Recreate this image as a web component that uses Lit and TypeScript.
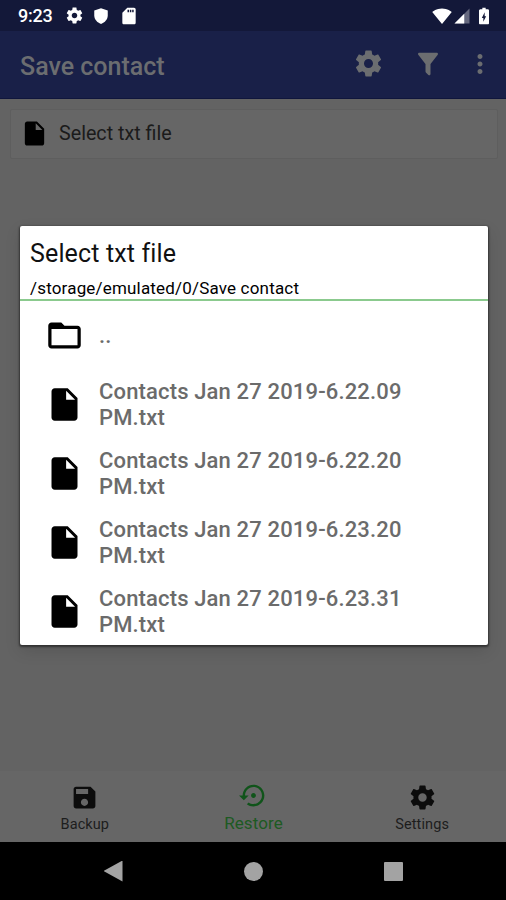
import { LitElement, html, css, svg } from "lit";
import { customElement, property } from "lit/decorators.js";

const ICONS: Record<string, string> = {
  settings:
    "M19.43 12.98c.04-.32.07-.64.07-.98s-.03-.66-.07-.98l2.11-1.65c.19-.15.24-.42.12-.64l-2-3.46c-.12-.22-.39-.3-.61-.22l-2.49 1c-.52-.4-1.08-.73-1.69-.98l-.38-2.65C14.46 2.18 14.25 2 14 2h-4c-.25 0-.46.18-.49.42l-.38 2.65c-.61.25-1.17.59-1.69.98l-2.49-1c-.23-.09-.49 0-.61.22l-2 3.46c-.13.22-.07.49.12.64l2.11 1.65c-.04.32-.07.65-.07.98s.03.66.07.98l-2.11 1.65c-.19.15-.24.42-.12.64l2 3.46c.12.22.39.3.61.22l2.49-1c.52.4 1.08.73 1.69.98l.38 2.65c.03.24.24.42.49.42h4c.25 0 .46-.18.49-.42l.38-2.65c.61-.25 1.17-.59 1.69-.98l2.49 1c.23.09.49 0 .61-.22l2-3.46c.12-.22.07-.49-.12-.64l-2.11-1.65zM12 15.5c-1.93 0-3.5-1.57-3.5-3.5s1.57-3.5 3.5-3.5 3.5 1.57 3.5 3.5-1.57 3.5-3.5 3.5z",
  shield: "M12 1.500L3 4.700v6.400c0 5.400 3.800 9.900 9 11.400 5.200-1.500 9-6 9-11.400V4.700L12 1.500z",
  sdcard:
    "M18 2h-8L4 8v12c0 1.100.9 2 2 2h12c1.100 0 2-.9 2-2V4c0-1.100-.9-2-2-2zm-6 5.500h-1.800V4.500H12v3zm2.800 0H13V4.500h1.800v3zm2.800 0h-1.800V4.500h1.800v3z",
  filter:
    "M14 12v7.880c.04.3-.06.62-.29.83-.39.39-1.020.39-1.410 0L10.290 18.700c-.23-.23-.33-.54-.29-.83V12h-.03L4.210 4.620c-.34-.43-.26-1.060.17-1.400.19-.14.4-.22.62-.22h14c.22 0 .43.08.62.22.43.34.51.97.17 1.400L14.030 12H14z",
  more: "M12 8c1.100 0 2-.9 2-2s-.9-2-2-2-2 .9-2 2 .9 2 2 2zm0 2c-1.100 0-2 .9-2 2s.9 2 2 2 2-.9 2-2-.9-2-2-2zm0 6c-1.100 0-2 .9-2 2s.9 2 2 2 2-.9 2-2-.9-2-2-2z",
  file: "M6 2c-1.100 0-1.990.9-1.990 2L4 20c0 1.100.89 2 1.990 2H18c1.100 0 2-.9 2-2V8l-6-6H6zm7 7V3.500L18.500 9H13z",
  folder:
    "M20 6h-8l-2-2H4c-1.100 0-1.990.9-1.990 2L2 18c0 1.100.9 2 2 2h16c1.100 0 2-.9 2-2V8c0-1.100-.9-2-2-2zm0 12H4V8h16v10z",
  save: "M17 3H5c-1.110 0-2 .9-2 2v14c0 1.100.89 2 2 2h14c1.100 0 2-.9 2-2V7l-4-4zm-5 16c-1.660 0-3-1.340-3-3s1.340-3 3-3 3 1.340 3 3-1.340 3-3 3zm3-10H5V5h10v4z",
  restore:
    "M14 12c0-1.100-.9-2-2-2s-2 .9-2 2 .9 2 2 2 2-.9 2-2zm-2-9c-4.970 0-9 4.030-9 9H0l4 4 4-4H5c0-3.870 3.130-7 7-7s7 3.130 7 7-3.130 7-7 7c-1.510 0-2.910-.49-4.060-1.300l-1.420 1.440C8.040 20.300 9.940 21 12 21c4.970 0 9-4.030 9-9s-4.030-9-9-9z",
  wifi: "M12 21.500L.3 7.200C1 6.700 5.300 3 12 3s11 3.700 11.700 4.200L12 21.500z",
  battery:
    "M15.670 4H14V2h-4v2H8.330C7.600 4 6 4.600 6 5.330v15.330C6 21.400 6.600 22 7.330 22h9.330c.74 0 1.340-.6 1.340-1.330V5.330C18 4.600 17.400 4 15.670 4zM11.200 19v-4.700H9.400L12.800 7.500v4.900h1.800L11.200 19z",
};

@customElement("md-icon")
export class MdIcon extends LitElement {
  @property() name = "";
  static styles = css`
    :host { display: block; flex: none; width: 24px; height: 24px; }
    svg { display: block; width: 100%; height: 100%; fill: currentColor; }
    .dim { opacity: 0.35; }
  `;
  render() {
    return html`<svg viewBox="0 0 24 24">
      ${this.name === "signal"
        ? svg`<path class="dim" d="M2 22h20V2z"/><path d="M2 22h13V9z"/>`
        : svg`<path fill-rule="evenodd" d=${ICONS[this.name] ?? ""}/>`}
    </svg>`;
  }
}

const FILES = ["6.22.09", "6.22.20", "6.23.20", "6.23.31"];

@customElement("app-root")
export class AppRoot extends LitElement {
  static styles = css`
    :host {
      display: flex;
      flex-direction: column;
      position: relative;
      width: 506px;
      height: 900px;
      overflow: hidden;
      background: #636363;
      font-family: Roboto, "Liberation Sans", sans-serif;
      color: #000;
      white-space: nowrap;
    }
    .status {
      height: 31px;
      flex: none;
      box-sizing: border-box;
      background: #131839;
      color: #fff;
      display: flex;
      align-items: center;
      padding: 0 12px 0 18px;
    }
    .clock { font-size: 18px; font-weight: 500; line-height: 33px; width: 46px; letter-spacing: -0.2px; }
    .s-gear { width: 19px; height: 19px; margin-left: 1px; }
    .s-shield { width: 18px; height: 18px; margin-left: 8px; }
    .s-sd { width: 20px; height: 20px; margin-left: 9px; }
    .s-wifi { width: 20px; height: 20px; margin-left: auto; }
    .s-signal { width: 18px; height: 18px; margin-left: 1px; }
    .s-battery { width: 20px; height: 20px; margin-left: 3px; }
    .appbar {
      height: 68px;
      flex: none;
      box-sizing: border-box;
      background: #192048;
      border-bottom: 1px solid #10163c;
      color: #6b6d70;
      display: flex;
      align-items: center;
      padding: 0 11px 2px 20px;
    }
    .title { font-size: 25px; font-weight: 500; flex: 1; padding-top: 5px; }
    .a-gear { width: 31px; height: 31px; }
    .a-filter { width: 30px; height: 30px; margin-left: 29px; }
    .a-more { width: 30px; height: 30px; margin-left: 22px; }
    .content { flex: 1; padding: 10px 8px 0 10px; }
    .card {
      height: 50px;
      box-sizing: border-box;
      background: #666;
      border: 1px solid #5e5e5e;
      border-radius: 2px;
      display: flex;
      align-items: center;
      padding: 0 0 2px 9px;
      font-size: 19.700px;
      color: #1b1b1b;
    }
    .card md-icon { width: 29px; height: 29px; color: #000; margin-right: 10px; }
    .nav {
      height: 71px;
      flex: none;
      background: #666;
      display: grid;
      grid-template-columns: repeat(3, 1fr);
      font-size: 14.500px;
      letter-spacing: 0.1px;
      color: #1d1d1d;
    }
    .tab { display: flex; flex-direction: column; align-items: center; padding: 12px 0 0 1px; box-sizing: border-box; }
    .tab md-icon { width: 29px; height: 29px; color: #0c0c0c; }
    .tab span { line-height: 20px; margin-top: 3px; }
    .active { color: #1d5a22; font-size: 17px; padding-top: 10px; }
    .active md-icon { color: #10541a; }
    .sys {
      height: 58px;
      flex: none;
      background: #000;
      display: flex;
      justify-content: center;
      align-items: center;
      gap: 121px;
    }
    .back, .home, .recent { display: block; background: #a3a3a3; }
    .back { width: 19px; height: 21px; clip-path: polygon(0 50%, 100% 0, 100% 100%); }
    .home { width: 19px; height: 19px; border-radius: 50%; }
    .recent { width: 19px; height: 19px; border-radius: 1px; }
    .dialog {
      position: absolute;
      left: 20px;
      top: 225.500px;
      width: 467.500px;
      height: 419.500px;
      background: #fff;
      border-radius: 2px;
      box-shadow: 0 1px 2px 1px rgba(0, 0, 0, 0.45), 0 6px 16px rgba(0, 0, 0, 0.12);
      overflow: hidden;
    }
    .head {
      height: 75px;
      box-sizing: border-box;
      border-bottom: 2px solid #8bca8e;
      padding: 12.500px 10px 0;
    }
    .heading { font-size: 25px; line-height: 32px; color: #111; letter-spacing: 0.14px; }
    .path { font-size: 17px; line-height: 20px; margin-top: 8px; color: #000; letter-spacing: 0.18px; }
    .row {
      height: 69px;
      display: flex;
      align-items: center;
      padding-left: 25px;
      font-size: 22px;
      line-height: 26px;
      font-weight: 500;
      letter-spacing: 0.15px;
      color: #6b6b6b;
    }
    .row md-icon { width: 39px; height: 39px; color: #000; margin-right: 15px; }
    .label { width: 330px; white-space: normal; padding-top: 1px; }
  `;

  render() {
    return html`
      <div class="status">
        <span class="clock">9:23</span>
        <md-icon class="s-gear" name="settings"></md-icon>
        <md-icon class="s-shield" name="shield"></md-icon>
        <md-icon class="s-sd" name="sdcard"></md-icon>
        <md-icon class="s-wifi" name="wifi"></md-icon>
        <md-icon class="s-signal" name="signal"></md-icon>
        <md-icon class="s-battery" name="battery"></md-icon>
      </div>
      <div class="appbar">
        <span class="title">Save contact</span>
        <md-icon class="a-gear" name="settings"></md-icon>
        <md-icon class="a-filter" name="filter"></md-icon>
        <md-icon class="a-more" name="more"></md-icon>
      </div>
      <div class="content">
        <div class="card"><md-icon name="file"></md-icon><span>Select txt file</span></div>
      </div>
      <div class="nav">
        <div class="tab"><md-icon name="save"></md-icon><span>Backup</span></div>
        <div class="tab active"><md-icon name="restore"></md-icon><span>Restore</span></div>
        <div class="tab"><md-icon name="settings"></md-icon><span>Settings</span></div>
      </div>
      <div class="sys"><i class="back"></i><i class="home"></i><i class="recent"></i></div>
      <div class="dialog">
        <div class="head">
          <div class="heading">Select txt file</div>
          <div class="path">/storage/emulated/0/Save contact</div>
        </div>
        <div class="row"><md-icon name="folder"></md-icon><span class="label">..</span></div>
        ${FILES.map(
          (t) => html`<div class="row">
            <md-icon name="file"></md-icon><span class="label">Contacts Jan 27 2019-${t} PM.txt</span>
          </div>`
        )}
      </div>
    `;
  }
}
